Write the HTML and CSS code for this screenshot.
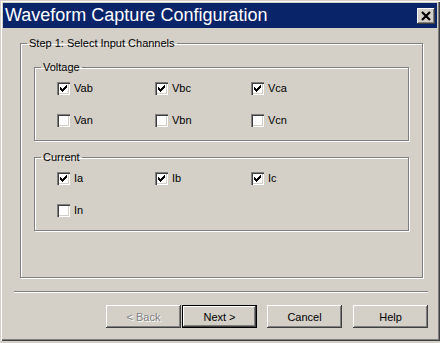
FILE: index.html
```html
<!DOCTYPE html>
<html lang="en">
<head>
    <meta charset="UTF-8">
    <title>Waveform Capture Configuration</title>
    <link rel="stylesheet" href="styles.css">
</head>
<body>
    <!-- shared glyphs -->
    <svg class="defs" width="0" height="0">
        <symbol id="tick" viewBox="0 0 13 13">
            <path d="M9 3h1v1h-1z M8 4h2v1h-2z M3 5h1v1h-1z M7 5h3v1h-3z M3 6h2v1h-2z M6 6h3v1h-3z M3 7h5v1h-5z M4 8h3v1h-3z M5 9h1v1h-1z" fill="#000"/>
        </symbol>
    </svg>

    <div class="window">
        <div class="titlebar">
            <span class="title">Waveform Capture Configuration</span>
            <span class="close">
                <svg width="18" height="16" viewBox="0 0 18 16">
                    <path d="M5 4 L13 12 M13 4 L5 12" stroke="#000" stroke-width="2.2" fill="none"/>
                </svg>
            </span>
        </div>

        <div class="content">
            <fieldset class="group outer">
                <legend>Step 1: Select Input Channels</legend>

                <fieldset class="group inner voltage">
                    <legend>Voltage</legend>
                    <div class="channels">
                        <label class="check"><span class="box"><svg><use href="#tick"/></svg></span>Vab</label>
                        <label class="check"><span class="box"><svg><use href="#tick"/></svg></span>Vbc</label>
                        <label class="check"><span class="box"><svg><use href="#tick"/></svg></span>Vca</label>
                        <label class="check"><span class="box"></span>Van</label>
                        <label class="check"><span class="box"></span>Vbn</label>
                        <label class="check"><span class="box"></span>Vcn</label>
                    </div>
                </fieldset>

                <fieldset class="group inner">
                    <legend>Current</legend>
                    <div class="channels">
                        <label class="check"><span class="box"><svg><use href="#tick"/></svg></span>Ia</label>
                        <label class="check"><span class="box"><svg><use href="#tick"/></svg></span>Ib</label>
                        <label class="check"><span class="box"><svg><use href="#tick"/></svg></span>Ic</label>
                        <label class="check"><span class="box"></span>In</label>
                    </div>
                </fieldset>
            </fieldset>

            <div class="footer">
                <div class="separator"></div>
                <div class="buttons">
                    <button class="btn back" disabled>&lt; Back</button>
                    <button class="btn default">Next &gt;</button>
                    <button class="btn cancel">Cancel</button>
                    <button class="btn help">Help</button>
                </div>
            </div>
        </div>
    </div>
</body>
</html>
```

FILE: styles.css
```css
body {
    margin: 0;
    background-color: #d4d0c8;
    font-family: "Liberation Sans", Arial, sans-serif;
    font-size: 11px;
    color: #000;
}
.defs {
    position: absolute;
}
.window {
    width: 440px;
    height: 341px;
    box-sizing: border-box;
    padding: 3px;
    background-color: #d4d0c8;
    /* classic raised frame */
    box-shadow: inset 1px 1px #d4d0c8, inset 2px 2px #fff,
                inset -1px -1px #404040, inset -2px -2px #808080;
}
.titlebar {
    height: 25px;
    background-color: #0a246a;
    display: flex;
    align-items: center;
    justify-content: space-between;
    padding-left: 2px;
}
.title {
    color: #fff;
    font-size: 18px;
    line-height: 25px;
}
.close {
    width: 18px;
    height: 16px;
    margin-right: 2px;
    background-color: #d4d0c8;
    box-shadow: inset -1px -1px #404040, inset 1px 1px #fff,
                inset -2px -2px #808080;
    display: flex;
}
.content {
    padding: 9px 14px 0 17px;
}
.group {
    margin: 0;
    padding: 0;
    min-width: 0;
    border: 1px solid #808080;
    box-shadow: inset 1px 1px #fff, 1px 1px #fff; /* etched look */
}
.group legend {
    padding: 0 2px;
    line-height: 13px;
}
.outer {
    width: 403px;
    box-sizing: border-box;
    padding: 11px 13px 46px;
}
.outer > legend {
    margin-left: -7px;
}
.inner {
    padding: 8px 0 13px 22px;
}
.inner legend {
    margin-left: -16px;
}
.voltage {
    margin-bottom: 10px;
}
.channels {
    display: grid;
    grid-template-columns: 98px 96px auto;
    row-gap: 19px;
}
.check {
    display: flex;
    align-items: center;
    gap: 4px;
    height: 13px;
    line-height: 13px;
}
.box {
    width: 13px;
    height: 13px;
    box-sizing: border-box;
    background-color: #fff;
    box-shadow: inset 1px 1px #808080, inset 2px 2px #404040,
                inset -1px -1px #fff, inset -2px -2px #d4d0c8;
    flex-shrink: 0;
}
.box svg {
    display: block;
    width: 13px;
    height: 13px;
}
.footer {
    margin: 0 -5px 0 -6px;
}
.separator {
    margin-top: 13px;
    border-top: 1px solid #808080;
    border-bottom: 1px solid #fff;
}
.buttons {
    display: flex;
    justify-content: flex-end;
    margin-top: 12px;
}
.btn {
    width: 75px;
    height: 23px;
    padding: 0;
    border: none;
    background-color: #d4d0c8;
    font-family: inherit;
    font-size: 11px;
    color: #000;
    box-shadow: inset -1px -1px #404040, inset 1px 1px #fff,
                inset -2px -2px #808080;
}
.back {
    margin-right: 1px;
    color: #808080;
    text-shadow: 1px 1px #fff;
}
.default {
    margin-right: 10px;
    box-shadow: inset 0 0 0 1px #000, inset -2px -2px #404040,
                inset 2px 2px #fff, inset -3px -3px #808080;
}
.cancel {
    margin-right: 11px;
}
```
